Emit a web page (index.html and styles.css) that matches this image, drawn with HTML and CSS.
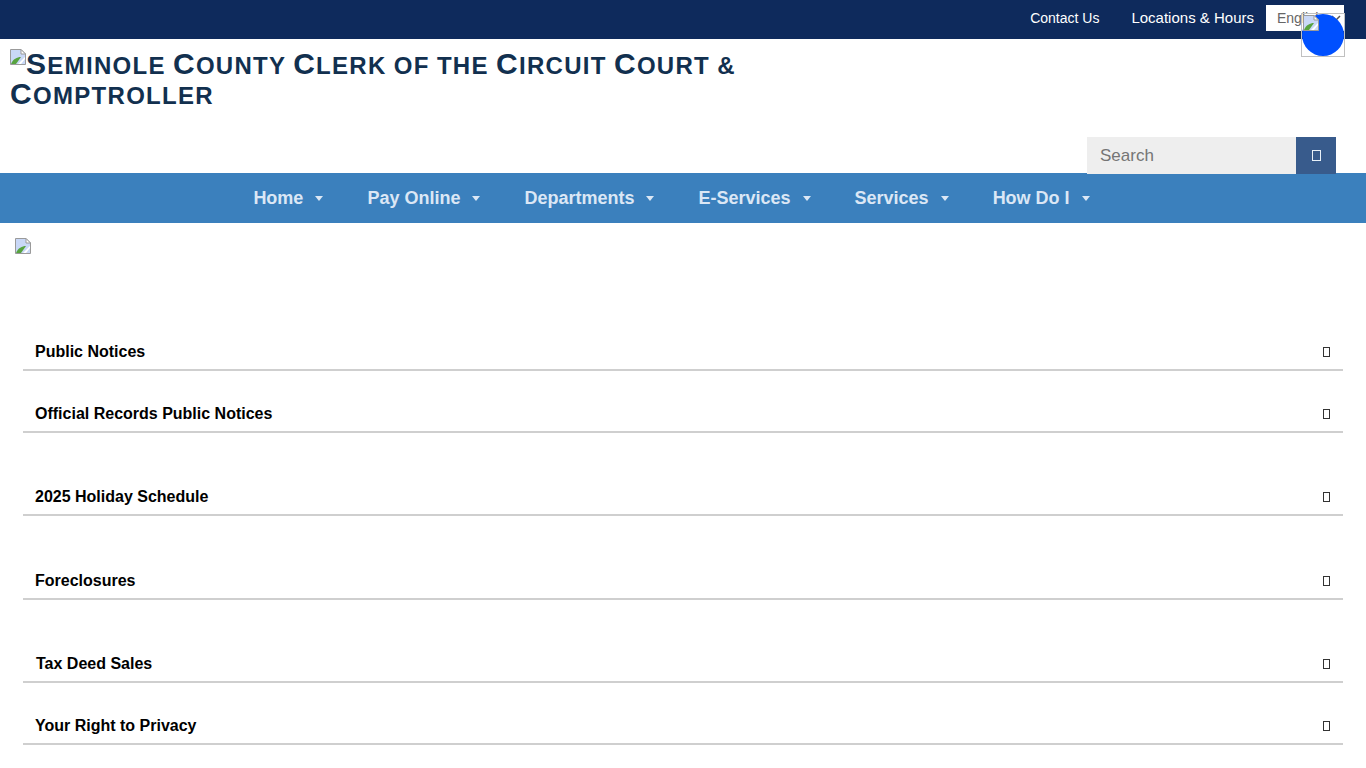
FILE: index.html
```html
<!DOCTYPE html>
<html lang="en">
<head>
  <meta charset="UTF-8">
  <meta name="viewport" content="width=device-width, initial-scale=1">
  <title>Seminole County Clerk of the Circuit Court &amp; Comptroller</title>
  <link rel="stylesheet" href="styles.css">
</head>
<body>

  <svg class="svg-defs" width="0" height="0">
    <symbol id="broken-img" viewBox="0 0 16 16">
      <path d="M.5.5H11L15.500 5v10.500H.5z" fill="#c9d8f7" stroke="#9a9a9a"/>
      <path d="M1 15c2-5 6-7 10-7l-5 7z" fill="#57a33f"/>
      <path d="M11 .5V5h4.500z" fill="#fff" stroke="#9a9a9a"/>
      <path d="M8 15 15 8v2l-4 5z" fill="#fff"/>
    </symbol>
  </svg>

  <div class="top-bar">
    <a class="top-link" href="#">Contact Us</a>
    <a class="top-link top-link-wide" href="#">Locations &amp; Hours</a>
    <div class="lang-box">
      <span>English</span>
      <svg class="lang-arrow" width="10" height="6" viewBox="0 0 10 6"><path d="M1 1l4 4 4-4" fill="none" stroke="#555" stroke-width="1.500"/></svg>
    </div>
  </div>

  <!-- floating widget over the language box -->
  <div class="chat-widget">
    <svg class="chat-icon" width="16" height="16"><use href="#broken-img"/></svg>
  </div>

  <h1 class="site-title">
    <svg class="title-icon" width="16" height="16"><use href="#broken-img"/></svg><span class="cap">S</span>eminole <span class="cap">C</span>ounty <span class="cap">C</span>lerk of the <span class="cap">C</span>ircuit <span class="cap">C</span>ourt &amp; <span class="cap">C</span>omptroller
  </h1>

  <div class="search-row">
    <div class="search-input">Search</div>
    <button class="search-btn"><span class="tofu tofu-light"></span></button>
  </div>

  <nav class="main-nav">
    <a class="nav-item" href="#">Home<span class="nav-arrow"></span></a>
    <a class="nav-item" href="#">Pay Online<span class="nav-arrow"></span></a>
    <a class="nav-item" href="#">Departments<span class="nav-arrow"></span></a>
    <a class="nav-item" href="#">E-Services<span class="nav-arrow"></span></a>
    <a class="nav-item" href="#">Services<span class="nav-arrow"></span></a>
    <a class="nav-item" href="#">How Do I<span class="nav-arrow"></span></a>
  </nav>

  <div class="banner">
    <svg width="16" height="16"><use href="#broken-img"/></svg>
  </div>

  <div class="notices">
    <div class="notice">Public Notices<span class="tofu"></span></div>
    <div class="notice">Official Records Public Notices<span class="tofu"></span></div>
    <div class="notice notice-gap">2025 Holiday Schedule<span class="tofu"></span></div>
    <div class="notice notice-gap notice-wide-gap">Foreclosures<span class="tofu"></span></div>
    <div class="notice notice-gap notice-tax">Tax Deed Sales<span class="tofu"></span></div>
    <div class="notice">Your Right to Privacy<span class="tofu"></span></div>
  </div>

</body>
</html>
```

FILE: styles.css
```css
body {
  font-family: "Liberation Sans", Arial, sans-serif;
  margin: 0;
  padding: 0;
  background-color: #fff;
  overflow: hidden;
}

.svg-defs {
  position: absolute;
}

/* Top bar */
.top-bar {
  display: flex;
  justify-content: flex-end;
  align-items: flex-start;
  height: 39px;
  padding-right: 22px;
  background-color: #0e2a5c;
}

.top-link {
  color: #fff;
  font-size: 14px;
  line-height: 16px;
  margin-top: 10px;
  margin-right: 32px;
  text-decoration: none;
}

.top-link-wide {
  font-size: 15px;
  margin-right: 12px;
}

.lang-box {
  display: flex;
  justify-content: space-between;
  align-items: center;
  box-sizing: border-box;
  width: 78px;
  height: 26px;
  margin-top: 5px;
  padding: 0 3px 0 11px;
  background-color: #fff;
  color: #666;
  font-size: 14px;
}

.chat-widget {
  position: absolute;
  top: 13px;
  left: 1301px;
  width: 42px;
  height: 42px;
  border: 1px solid #c0c0c0;
}

.chat-widget::before {
  content: "";
  position: absolute;
  inset: 0;
  border-radius: 50%;
  background-color: #0050ff;
}

.chat-icon {
  position: absolute;
  top: 1px;
  left: 1px;
}

/* Title */
.site-title {
  margin: 0;
  padding: 10px 600px 0 10px;
  height: 89px;
  box-sizing: border-box;
  color: #12304f;
  font-size: 24px;
  line-height: 30px;
  font-weight: bold;
  letter-spacing: 1.300px;
  word-spacing: -0.8px;
  text-transform: uppercase;
}

.cap {
  font-size: 30px;
  line-height: 24px;
}

.title-icon {
  vertical-align: 9px;
}

/* Search */
.search-row {
  display: flex;
  justify-content: flex-end;
  height: 46px;
  padding: 9px 30px 0 0;
  box-sizing: border-box;
  position: relative;
  z-index: 3;
}

.search-input {
  box-sizing: border-box;
  width: 209px;
  height: 37px;
  padding: 9px 13px;
  background-color: #eee;
  color: #757575;
  font-size: 17px;
  line-height: 19px;
}

.search-btn {
  display: flex;
  justify-content: center;
  align-items: center;
  width: 40px;
  height: 37px;
  padding: 0;
  border: none;
  background-color: #385b8c;
}

.tofu {
  display: block;
  box-sizing: border-box;
  width: 7px;
  height: 10px;
  border: 1px solid #333;
}

.tofu-light {
  width: 9px;
  height: 11px;
  border-color: #e8f0f8;
}

/* Main nav */
.main-nav {
  display: flex;
  justify-content: center;
  gap: 44px;
  position: relative;
  z-index: 2;
  margin-top: -1px;
  height: 50px;
  padding-right: 23px;
  background-color: #3b80bd;
}

.nav-item {
  display: flex;
  align-items: center;
  color: #dbe7f5;
  font-size: 18px;
  font-weight: bold;
  text-decoration: none;
}

.nav-arrow {
  width: 0;
  height: 0;
  margin-left: 12px;
  margin-top: 1px;
  border-top: 5px solid #dbe7f5;
  border-left: 4px solid transparent;
  border-right: 4px solid transparent;
}

/* Banner image placeholder */
.banner {
  height: 104px;
  padding: 15px 0 0 15px;
  box-sizing: border-box;
}

.banner svg {
  display: block;
}

/* Notices list */
.notices {
  padding: 0 23px;
}

.notice {
  display: flex;
  justify-content: space-between;
  align-items: center;
  box-sizing: border-box;
  height: 44px;
  padding: 8px 13px 0 12px;
  margin-bottom: 18px;
  border-bottom: 2px solid #cfcfcf;
  color: #000;
  font-size: 16px;
  font-weight: bold;
}

.notice-gap {
  margin-top: 39px;
  margin-bottom: 0;
}

.notice-wide-gap {
  margin-top: 40px;
}

.notice-tax {
  margin-bottom: 18px;
  padding-left: 13px;
}
```
